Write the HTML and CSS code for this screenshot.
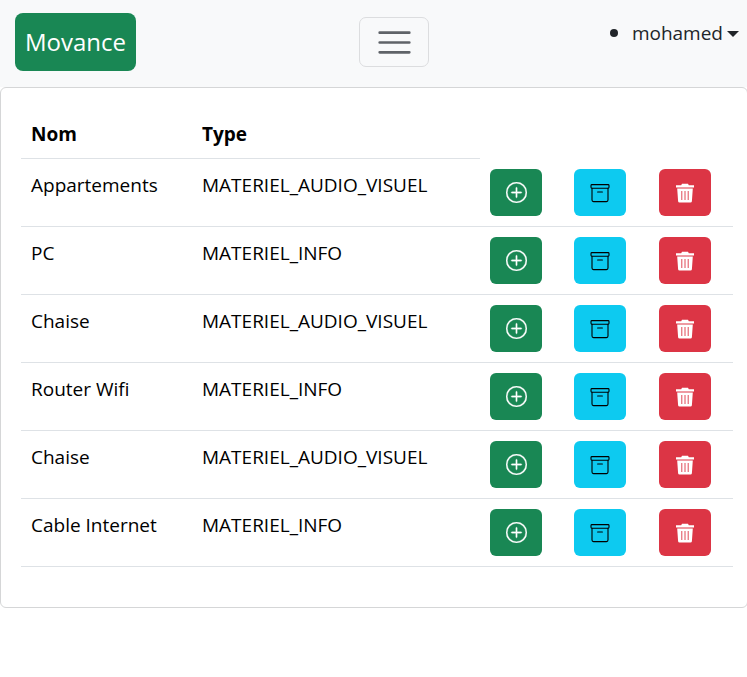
FILE: index.html
```html
<!DOCTYPE html>
<html lang="fr">
<head>
<meta charset="utf-8">
<title>Movance</title>
<link rel="stylesheet" href="styles.css">
</head>
<body>
<nav class="navbar">
  <a class="brand" href="#">Movance</a>
  <button class="toggler" type="button" aria-label="Menu"><svg viewBox="0 0 30 30" width="37" height="37"><path d="M3 7h24M3 15h24M3 23h24" stroke="#5f6368" stroke-width="2.200" stroke-linecap="round" fill="none"/></svg></button>
  <ul class="usermenu"><li class="useritem"><a class="user" href="#">mohamed<span class="caret"></span></a></li></ul>
</nav>
<main class="card">
  <table class="table">
    <thead>
      <tr><th class="c-nom">Nom</th><th class="c-type">Type</th></tr>
    </thead>
    <tbody>
      <tr><td>Appartements</td><td>MATERIEL_AUDIO_VISUEL</td>
        <td class="act"><button class="btn green"><svg class="ic plus" viewBox="0 0 16 16" fill="currentColor" stroke="currentColor" stroke-width=".25"><path d="M8 15A7 7 0 1 1 8 1a7 7 0 0 1 0 14zm0 1A8 8 0 1 0 8 0a8 8 0 0 0 0 16z"/><path d="M8 4a.5.5 0 0 1 .5.5v3h3a.5.5 0 0 1 0 1h-3v3a.5.5 0 0 1-1 0v-3h-3a.5.5 0 0 1 0-1h3v-3A.5.5 0 0 1 8 4z"/></svg></button></td>
        <td class="act"><button class="btn cyan"><svg class="ic" viewBox="0 0 20 20" fill="none" stroke="currentColor" stroke-width="1.100"><rect x="1" y="1.600" width="18" height="3.600" rx=".9"/><path d="M2 5.200v11.900a1.500 1.500 0 0 0 1.500 1.500h13a1.500 1.500 0 0 0 1.500-1.500V5.200M7.600 9h4.800" stroke-linecap="round"/></svg></button></td>
        <td class="act"><button class="btn red"><svg class="ic trash" viewBox="0 0 18 20"><path fill="currentColor" d="M0 2.200h5.200L6 .8h6l.8 1.400H18v2.400H0zM1.200 5.400h15.600l-.9 12.800a1.500 1.500 0 0 1-1.500 1.400H3.600a1.500 1.500 0 0 1-1.500-1.400z"/><path stroke="#dc3545" stroke-width=".9" d="M5.800 8v9M9 8v9M12.200 8v9"/></svg></button></td></tr>
      <tr><td>PC</td><td>MATERIEL_INFO</td>
        <td class="act"><button class="btn green"><svg class="ic plus" viewBox="0 0 16 16" fill="currentColor" stroke="currentColor" stroke-width=".25"><path d="M8 15A7 7 0 1 1 8 1a7 7 0 0 1 0 14zm0 1A8 8 0 1 0 8 0a8 8 0 0 0 0 16z"/><path d="M8 4a.5.5 0 0 1 .5.5v3h3a.5.5 0 0 1 0 1h-3v3a.5.5 0 0 1-1 0v-3h-3a.5.5 0 0 1 0-1h3v-3A.5.5 0 0 1 8 4z"/></svg></button></td>
        <td class="act"><button class="btn cyan"><svg class="ic" viewBox="0 0 20 20" fill="none" stroke="currentColor" stroke-width="1.100"><rect x="1" y="1.600" width="18" height="3.600" rx=".9"/><path d="M2 5.200v11.900a1.500 1.500 0 0 0 1.500 1.500h13a1.500 1.500 0 0 0 1.500-1.500V5.200M7.600 9h4.800" stroke-linecap="round"/></svg></button></td>
        <td class="act"><button class="btn red"><svg class="ic trash" viewBox="0 0 18 20"><path fill="currentColor" d="M0 2.200h5.200L6 .8h6l.8 1.400H18v2.400H0zM1.200 5.400h15.600l-.9 12.800a1.500 1.500 0 0 1-1.500 1.400H3.600a1.500 1.500 0 0 1-1.500-1.400z"/><path stroke="#dc3545" stroke-width=".9" d="M5.800 8v9M9 8v9M12.200 8v9"/></svg></button></td></tr>
      <tr><td>Chaise</td><td>MATERIEL_AUDIO_VISUEL</td>
        <td class="act"><button class="btn green"><svg class="ic plus" viewBox="0 0 16 16" fill="currentColor" stroke="currentColor" stroke-width=".25"><path d="M8 15A7 7 0 1 1 8 1a7 7 0 0 1 0 14zm0 1A8 8 0 1 0 8 0a8 8 0 0 0 0 16z"/><path d="M8 4a.5.5 0 0 1 .5.5v3h3a.5.5 0 0 1 0 1h-3v3a.5.5 0 0 1-1 0v-3h-3a.5.5 0 0 1 0-1h3v-3A.5.5 0 0 1 8 4z"/></svg></button></td>
        <td class="act"><button class="btn cyan"><svg class="ic" viewBox="0 0 20 20" fill="none" stroke="currentColor" stroke-width="1.100"><rect x="1" y="1.600" width="18" height="3.600" rx=".9"/><path d="M2 5.200v11.900a1.500 1.500 0 0 0 1.500 1.500h13a1.500 1.500 0 0 0 1.500-1.500V5.200M7.600 9h4.800" stroke-linecap="round"/></svg></button></td>
        <td class="act"><button class="btn red"><svg class="ic trash" viewBox="0 0 18 20"><path fill="currentColor" d="M0 2.200h5.200L6 .8h6l.8 1.400H18v2.400H0zM1.200 5.400h15.600l-.9 12.800a1.500 1.500 0 0 1-1.500 1.400H3.600a1.500 1.500 0 0 1-1.500-1.400z"/><path stroke="#dc3545" stroke-width=".9" d="M5.800 8v9M9 8v9M12.200 8v9"/></svg></button></td></tr>
      <tr><td>Router Wifi</td><td>MATERIEL_INFO</td>
        <td class="act"><button class="btn green"><svg class="ic plus" viewBox="0 0 16 16" fill="currentColor" stroke="currentColor" stroke-width=".25"><path d="M8 15A7 7 0 1 1 8 1a7 7 0 0 1 0 14zm0 1A8 8 0 1 0 8 0a8 8 0 0 0 0 16z"/><path d="M8 4a.5.5 0 0 1 .5.5v3h3a.5.5 0 0 1 0 1h-3v3a.5.5 0 0 1-1 0v-3h-3a.5.5 0 0 1 0-1h3v-3A.5.5 0 0 1 8 4z"/></svg></button></td>
        <td class="act"><button class="btn cyan"><svg class="ic" viewBox="0 0 20 20" fill="none" stroke="currentColor" stroke-width="1.100"><rect x="1" y="1.600" width="18" height="3.600" rx=".9"/><path d="M2 5.200v11.900a1.500 1.500 0 0 0 1.500 1.500h13a1.500 1.500 0 0 0 1.500-1.500V5.200M7.600 9h4.800" stroke-linecap="round"/></svg></button></td>
        <td class="act"><button class="btn red"><svg class="ic trash" viewBox="0 0 18 20"><path fill="currentColor" d="M0 2.200h5.200L6 .8h6l.8 1.400H18v2.400H0zM1.200 5.400h15.600l-.9 12.800a1.500 1.500 0 0 1-1.500 1.400H3.600a1.500 1.500 0 0 1-1.500-1.400z"/><path stroke="#dc3545" stroke-width=".9" d="M5.800 8v9M9 8v9M12.200 8v9"/></svg></button></td></tr>
      <tr><td>Chaise</td><td>MATERIEL_AUDIO_VISUEL</td>
        <td class="act"><button class="btn green"><svg class="ic plus" viewBox="0 0 16 16" fill="currentColor" stroke="currentColor" stroke-width=".25"><path d="M8 15A7 7 0 1 1 8 1a7 7 0 0 1 0 14zm0 1A8 8 0 1 0 8 0a8 8 0 0 0 0 16z"/><path d="M8 4a.5.5 0 0 1 .5.5v3h3a.5.5 0 0 1 0 1h-3v3a.5.5 0 0 1-1 0v-3h-3a.5.5 0 0 1 0-1h3v-3A.5.5 0 0 1 8 4z"/></svg></button></td>
        <td class="act"><button class="btn cyan"><svg class="ic" viewBox="0 0 20 20" fill="none" stroke="currentColor" stroke-width="1.100"><rect x="1" y="1.600" width="18" height="3.600" rx=".9"/><path d="M2 5.200v11.900a1.500 1.500 0 0 0 1.500 1.500h13a1.500 1.500 0 0 0 1.500-1.500V5.200M7.600 9h4.800" stroke-linecap="round"/></svg></button></td>
        <td class="act"><button class="btn red"><svg class="ic trash" viewBox="0 0 18 20"><path fill="currentColor" d="M0 2.200h5.200L6 .8h6l.8 1.400H18v2.400H0zM1.200 5.400h15.600l-.9 12.800a1.500 1.500 0 0 1-1.500 1.400H3.600a1.500 1.500 0 0 1-1.500-1.400z"/><path stroke="#dc3545" stroke-width=".9" d="M5.800 8v9M9 8v9M12.200 8v9"/></svg></button></td></tr>
      <tr><td>Cable Internet</td><td>MATERIEL_INFO</td>
        <td class="act"><button class="btn green"><svg class="ic plus" viewBox="0 0 16 16" fill="currentColor" stroke="currentColor" stroke-width=".25"><path d="M8 15A7 7 0 1 1 8 1a7 7 0 0 1 0 14zm0 1A8 8 0 1 0 8 0a8 8 0 0 0 0 16z"/><path d="M8 4a.5.5 0 0 1 .5.5v3h3a.5.5 0 0 1 0 1h-3v3a.5.5 0 0 1-1 0v-3h-3a.5.5 0 0 1 0-1h3v-3A.5.5 0 0 1 8 4z"/></svg></button></td>
        <td class="act"><button class="btn cyan"><svg class="ic" viewBox="0 0 20 20" fill="none" stroke="currentColor" stroke-width="1.100"><rect x="1" y="1.600" width="18" height="3.600" rx=".9"/><path d="M2 5.200v11.900a1.500 1.500 0 0 0 1.500 1.500h13a1.500 1.500 0 0 0 1.500-1.500V5.200M7.600 9h4.800" stroke-linecap="round"/></svg></button></td>
        <td class="act"><button class="btn red"><svg class="ic trash" viewBox="0 0 18 20"><path fill="currentColor" d="M0 2.200h5.200L6 .8h6l.8 1.400H18v2.400H0zM1.200 5.400h15.600l-.9 12.800a1.500 1.500 0 0 1-1.500 1.400H3.600a1.500 1.500 0 0 1-1.500-1.400z"/><path stroke="#dc3545" stroke-width=".9" d="M5.800 8v9M9 8v9M12.200 8v9"/></svg></button></td></tr>
    </tbody>
  </table>
</main>
</body>
</html>
```
FILE: styles.css
```css
* { box-sizing: border-box; }
html, body { margin: 0; background: #fff; }
body {
  font-family: "Open Sans", "Noto Sans", sans-serif;
  font-size: 19px;
  line-height: 30px;
  color: #212529;
  overflow: hidden;
  height: 677px;
}
.navbar {
  height: 87px;
  background: #f8f9fa;
  display: flex;
  align-items: flex-start;
  padding: 13px 8px 0 15px;
}
.brand {
  width: 121px;
  height: 58px;
  background: #198754;
  color: #fff;
  border-radius: 8px;
  font-size: 24px;
  line-height: 58px;
  text-align: center;
  text-decoration: none;
}
.toggler {
  width: 70px;
  height: 50px;
  margin: 4px 0 0 223px;
  padding: 0;
  display: flex;
  align-items: center;
  justify-content: center;
  background: transparent;
  border: 1px solid #dcdddf;
  border-radius: 7px;
}
.usermenu {
  margin: 5px 0 0 auto;
  padding: 0;
  list-style: none;
}
.useritem {
  display: flex;
  align-items: center;
  gap: 14px;
}
.useritem::before {
  content: "";
  width: 8px;
  height: 8px;
  border-radius: 50%;
  background: #212529;
}
.user { color: #212529; text-decoration: none; white-space: nowrap; }
.caret {
  display: inline-block;
  margin-left: 4px;
  vertical-align: 3px;
  border-top: 6px solid #212529;
  border-left: 6px solid transparent;
  border-right: 6px solid transparent;
}
.card {
  height: 521px;
  margin-right: -1px;
  padding: 21px 14px 0 20px;
  border: 1px solid #d5d6d7;
  border-radius: 6px;
  background: #fff;
}
.table {
  width: 712px;
  table-layout: fixed;
  border-collapse: separate;
  border-spacing: 0;
  color: #000;
}
.table th {
  height: 49px;
  padding: 10px 10px 9px;
  text-align: left;
  font-weight: 700;
  border-bottom: 1px solid #dee2e6;
}
.c-nom { width: 171px; }
.c-type { width: 288px; }
.table td {
  height: 68px;
  padding: 11px 10px 10px;
  vertical-align: top;
  border-bottom: 1px solid #dee2e6;
}
.table .act { padding-top: 10px; }
.btn {
  display: flex;
  align-items: center;
  justify-content: center;
  width: 52px;
  height: 47px;
  padding: 0;
  border: 0;
  border-radius: 6px;
}
.green { background: #198754; color: #fff; }
.cyan { background: #0dcaf0; color: #000; }
.red { background: #dc3545; color: #fff; }
.ic { width: 20px; height: 20px; display: block; }
.plus { width: 21px; height: 21px; }
.trash { width: 18px; height: 20px; }
```
